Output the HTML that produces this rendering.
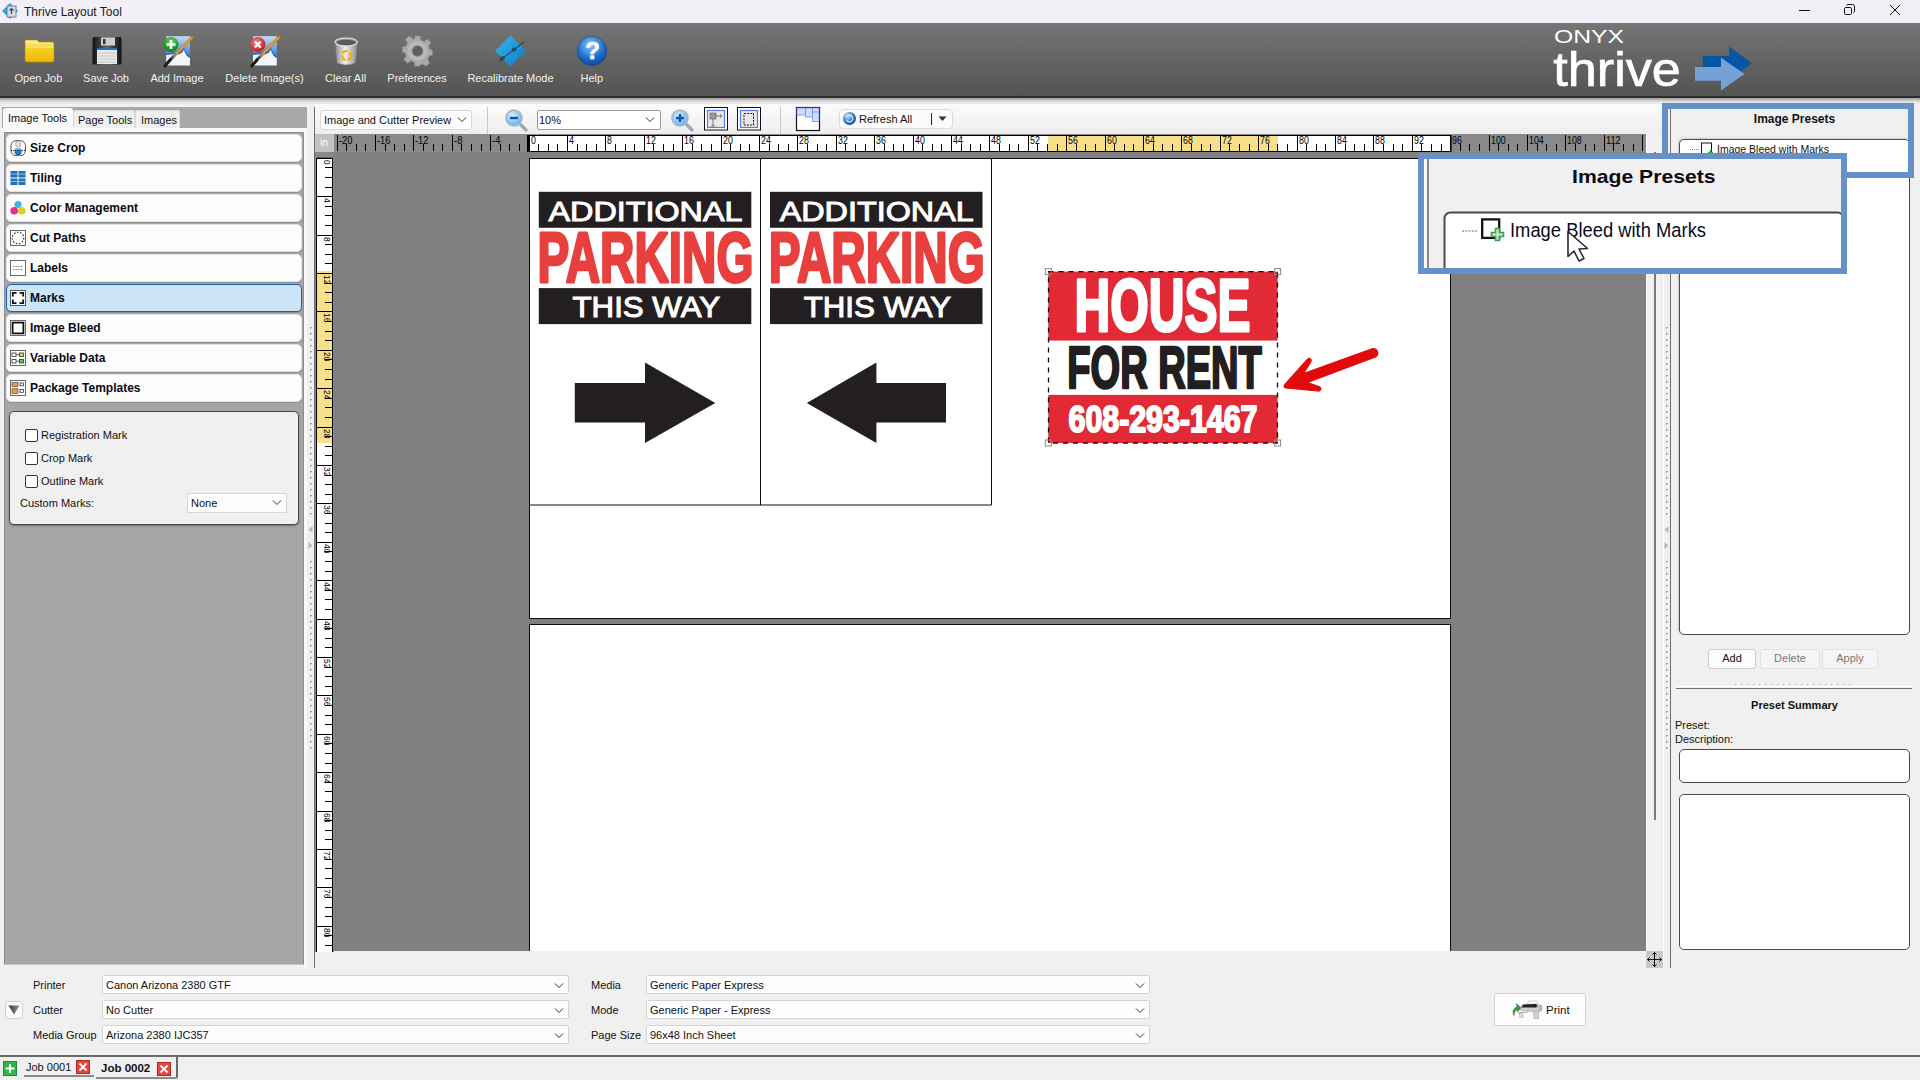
<!DOCTYPE html><html><head><meta charset="utf-8"><title>Thrive Layout Tool</title><style>
*{box-sizing:border-box}
html,body{margin:0;padding:0}
body{width:1920px;height:1080px;position:relative;overflow:hidden;background:#f0f0f0;font-family:"Liberation Sans",sans-serif;color:#000}
.a{position:absolute}
.t{position:absolute;white-space:nowrap;line-height:1}
</style></head><body><div class="a" style="left:0;top:0;width:1920px;height:23px;background:#f3eff6"></div>
<svg class="a" style="left:1px;top:2px" width="18" height="18" viewBox="0 0 18 18">
<path d="M1 9 L9 1 L17 9 L9 17 Z" fill="#2ea3e0"/>
<rect x="6" y="4" width="9" height="11" fill="#d8dbe6" stroke="#5a6a9a" stroke-width="0.8"/>
<path d="M10.5 12 V6.5 M8.5 8.5 L10.5 6.5 L12.5 8.5" stroke="#3b4a8a" stroke-width="1.2" fill="none"/>
</svg>
<div class="t" style="left:24px;top:6px;font-size:12px;color:#1b1b1b">Thrive Layout Tool</div>
<div class="a" style="left:1799px;top:10px;width:11px;height:1px;background:#111"></div>
<svg class="a" style="left:1840px;top:0px" width="20" height="20" viewBox="1840 0 20 20"><rect x="1844.5" y="7.5" width="7" height="7" rx="1.2" fill="none" stroke="#111" stroke-width="1"/><path d="M1846.5 5.5 Q1846.8 4.5 1848 4.5 H1852.5 Q1854.5 4.5 1854.5 6.5 V11 Q1854.5 12.2 1853.5 12.5" fill="none" stroke="#111" stroke-width="1"/></svg>
<svg class="a" style="left:1889px;top:4px" width="12" height="12" viewBox="0 0 12 12"><path d="M1 1 L11 11 M11 1 L1 11" stroke="#111" stroke-width="1"/></svg>
<div class="a" style="left:0;top:23px;width:1920px;height:74px;background:linear-gradient(#757575,#535353)"></div>
<div class="a" style="left:0;top:96px;width:1920px;height:2px;background:#2e2e2e"></div>
<div class="a" style="left:0;top:98px;width:1920px;height:7px;background:linear-gradient(#9a9a9a,#dcdcdc 50%,#f4f4f4)"></div>
<svg class="a" style="left:0;top:23px" width="640" height="74" viewBox="0 23 640 74">
<defs>
<linearGradient id="fold" x1="0" y1="0" x2="0" y2="1"><stop offset="0" stop-color="#fff3a8"/><stop offset="0.35" stop-color="#f7cf2a"/><stop offset="1" stop-color="#f0b800"/></linearGradient>
<linearGradient id="flop" x1="0" y1="0" x2="1" y2="0"><stop offset="0" stop-color="#111"/><stop offset="0.5" stop-color="#666"/><stop offset="1" stop-color="#111"/></linearGradient>
<linearGradient id="pic" x1="0" y1="0" x2="0" y2="1"><stop offset="0" stop-color="#c4ddf3"/><stop offset="0.6" stop-color="#4a8ad6"/><stop offset="1" stop-color="#2a6cc0"/></linearGradient>
<radialGradient id="grn" cx="0.5" cy="0.3" r="0.7"><stop offset="0" stop-color="#6fcf6a"/><stop offset="0.7" stop-color="#1f9a26"/><stop offset="1" stop-color="#127a18"/></radialGradient>
<radialGradient id="red" cx="0.4" cy="0.35" r="0.7"><stop offset="0" stop-color="#ff8080"/><stop offset="1" stop-color="#c0101a"/></radialGradient>
<radialGradient id="hlp" cx="0.45" cy="0.3" r="0.75"><stop offset="0" stop-color="#8cc8ff"/><stop offset="0.6" stop-color="#1f6fd0"/><stop offset="1" stop-color="#0d3f9a"/></radialGradient>
<linearGradient id="dia" x1="0" y1="0" x2="1" y2="1"><stop offset="0" stop-color="#3ab8ec"/><stop offset="1" stop-color="#0a7ac8"/></linearGradient>
<linearGradient id="trash" x1="0" y1="0" x2="1" y2="0"><stop offset="0" stop-color="#8a8a8a"/><stop offset="0.45" stop-color="#f0f0f0"/><stop offset="1" stop-color="#8a8a8a"/></linearGradient>
</defs>
<!-- folder -->
<path d="M25 41 Q25 40 26 40 H37 L39 42 H52 Q54 42 54 44 V60 Q54 62 52 62 H27 Q25 62 25 60 Z" fill="url(#fold)" stroke="#b88a00" stroke-width="0.6"/>
<path d="M26 47 H53" stroke="#fff7c0" stroke-width="1" opacity="0.7"/>
<!-- floppy -->
<rect x="92.5" y="37" width="29" height="27.5" rx="1.5" fill="url(#flop)"/>
<rect x="101" y="37.5" width="14" height="8" fill="#cfcfcf"/><rect x="103" y="39" width="2.5" height="5" fill="#333"/>
<rect x="97" y="48" width="20" height="16" fill="#e9e9e9"/><rect x="97" y="48" width="20" height="2" fill="#2a6cc0"/>
<path d="M98 53 H116 M98 56 H116 M98 59 H116 M98 62 H116" stroke="#b8b8b8" stroke-width="0.7"/>
<!-- add image -->
<g id="picA">
<rect x="166.2" y="36.2" width="23.8" height="29.3" fill="url(#pic)"/>
<path d="M166.2 53.5 Q172 52 178 52.5 Q182 51.5 184 47.5 Q185.5 53 190 56.5 V65.5 H166.2 Z" fill="#1f66c0"/>
<path d="M166.2 55 Q172 54 178 54.5 Q182.5 53.5 184 49.5 Q185.5 56 190 58 V65.5 H166.2 Z" fill="#f2f5f9"/>
<path d="M192.5 37 L173 57" stroke="#c07a20" stroke-width="3" stroke-linecap="round"/>
<path d="M192 37.5 L176 54" stroke="#e8a848" stroke-width="1.2"/>
<path d="M173.5 56.5 L170 60" stroke="#2a5a90" stroke-width="2.5"/>
<path d="M170.5 59.5 L165 66" stroke="#1a1a1a" stroke-width="3" stroke-linecap="round"/>
</g>
<circle cx="171" cy="44.5" r="7.6" fill="url(#grn)"/>
<path d="M171 40 V49 M166.5 44.5 H175.5" stroke="#fff" stroke-width="2.6"/>
<!-- delete image -->
<use href="#picA" transform="translate(86.8 0)"/>
<circle cx="257.8" cy="44.5" r="7.6" fill="url(#red)"/>
<path d="M254.8 41.5 L260.8 47.5 M260.8 41.5 L254.8 47.5" stroke="#fff" stroke-width="2.4"/>
<!-- trash -->
<path d="M335 42 Q346 36 357.5 42 L355.5 63 Q346 67 337 63 Z" fill="url(#trash)" stroke="#777" stroke-width="0.6"/>
<ellipse cx="346.2" cy="42" rx="11.4" ry="4" fill="#9a9a9a" stroke="#eee" stroke-width="1"/>
<ellipse cx="346.2" cy="42.5" rx="9.5" ry="2.8" fill="#5a5a5a"/>
<circle cx="346.5" cy="55.5" r="4.5" fill="none" stroke="#f5b000" stroke-width="2.2" stroke-dasharray="6 2"/>
<!-- gear -->
<g transform="translate(417.5 51)">
<path d="M-2.6 -15 H2.6 L3.4 -11 L6.6 -9.6 L10 -12 L13.7 -8.3 L11.2 -4.9 L12.5 -1.6 L15 -1 V4.2 L11.6 5 L10.2 8.4 L12.3 11.6 L8.6 15.3 L5.3 13 L2.4 14.2 L1.8 15.2 H-2.6 L-3.4 11.2 L-6.6 9.8 L-10 12.2 L-13.7 8.5 L-11.2 5 L-12.5 1.8 L-15 1.2 V-4 L-11.6 -4.8 L-10.2 -8.2 L-12.3 -11.4 L-8.6 -15.1 L-5.3 -12.8 L-3.4 -11.2 Z" fill="#a9a9a9" stroke="#8a8a8a" stroke-width="0.6"/>
<circle r="10" fill="#b8b8b8"/><circle r="5.8" fill="#7a7a7a"/><circle r="4.6" fill="#5f5f5f"/>
</g>
<!-- diamond -->
<path d="M510.5 35.5 L526 51 L510.5 66.5 L495 51 Z" fill="url(#dia)"/>
<path d="M499 61 L524 42" stroke="#1a1a1a" stroke-width="0.8"/>
<circle cx="502.5" cy="58.3" r="1.7" fill="none" stroke="#1a1a1a" stroke-width="0.8"/><circle cx="514" cy="49.5" r="1.7" fill="none" stroke="#1a1a1a" stroke-width="0.8"/>
<!-- help -->
<circle cx="592" cy="51" r="14.6" fill="url(#hlp)" stroke="#0a3a8a" stroke-width="0.5"/>
<text x="592.5" y="59" text-anchor="middle" font-family="Liberation Sans" font-weight="bold" font-size="24" fill="#fff" stroke="#fff" stroke-width="0.6">?</text>
</svg>
<div class="t" style="left:-21.6px;width:120px;text-align:center;top:73px;font-size:11px;color:#f2f2f2">Open Job</div>
<div class="t" style="left:46.0px;width:120px;text-align:center;top:73px;font-size:11px;color:#f2f2f2">Save Job</div>
<div class="t" style="left:117.0px;width:120px;text-align:center;top:73px;font-size:11px;color:#f2f2f2">Add Image</div>
<div class="t" style="left:204.5px;width:120px;text-align:center;top:73px;font-size:11px;color:#f2f2f2">Delete Image(s)</div>
<div class="t" style="left:285.6px;width:120px;text-align:center;top:73px;font-size:11px;color:#f2f2f2">Clear All</div>
<div class="t" style="left:357.0px;width:120px;text-align:center;top:73px;font-size:11px;color:#f2f2f2">Preferences</div>
<div class="t" style="left:450.5px;width:120px;text-align:center;top:73px;font-size:11px;color:#f2f2f2">Recalibrate Mode</div>
<div class="t" style="left:531.8px;width:120px;text-align:center;top:73px;font-size:11px;color:#f2f2f2">Help</div>
<svg class="a" style="left:1540px;top:23px" width="230" height="74" viewBox="1540 23 230 74">
<text x="1554" y="43" font-family="Liberation Sans" font-size="18" fill="#fff" textLength="70" lengthAdjust="spacingAndGlyphs">ONYX</text>
<text x="1553.3" y="86.2" font-family="Liberation Sans" font-size="48.5" fill="#fff" stroke="#fff" stroke-width="0.7" textLength="127.5" lengthAdjust="spacingAndGlyphs">thrive</text>
<path d="M1702.7 56 H1729 V46.4 L1752 63.3 L1729 80 V67 H1702.7 Z" fill="#0656a3"/>
<path d="M1695 67 H1721 V57.8 L1744.5 74 L1721 90.5 V80.7 H1695 Z" fill="#76a1d6"/>
</svg>
<div class="a" style="left:2px;top:107px;width:305px;height:21px;background:#a8a8a8"></div>
<div class="a" style="left:3px;top:108px;width:70px;height:25px;background:#f9f9f9;border-radius:3px 3px 0 0"></div>
<div class="a" style="left:73px;top:110px;width:62px;height:18px;background:#efefef;border:1px solid #dadada;border-bottom:none;border-radius:2px 2px 0 0"></div>
<div class="a" style="left:135px;top:110px;width:45px;height:18px;background:#efefef;border:1px solid #dadada;border-bottom:none;border-radius:2px 2px 0 0"></div>
<div class="t" style="left:8px;top:113px;font-size:11px;color:#111">Image Tools</div>
<div class="t" style="left:78px;top:115px;font-size:11px;color:#111">Page Tools</div>
<div class="t" style="left:141px;top:115px;font-size:11px;color:#111">Images</div>
<div class="a" style="left:4px;top:132px;width:300px;height:833px;background:#a6a6a6;border:1px solid #8c8c94;border-bottom:1px solid #c8c8c8"></div>
<div class="a" style="left:2px;top:128px;width:305px;height:4px;background:#f9f9f9"></div>
<div class="a" style="left:304px;top:128px;width:3px;height:839px;background:#f9f9f9"></div>
<div class="a" style="left:6px;top:134px;width:296px;height:28px;background:#fcfcfc;border:1px solid #e4e4e4;border-radius:5px;box-shadow:0 1px 0 #8f8f8f"></div>
<svg class="a" style="left:10px;top:140px" width="16" height="16" viewBox="0 0 16 16"><defs><linearGradient id="scb" x1="0" y1="0" x2="0" y2="1"><stop offset="0" stop-color="#bfe0f8"/><stop offset="0.45" stop-color="#2a8ad8"/><stop offset="1" stop-color="#0a62b8"/></linearGradient></defs><rect x="1" y="0.7" width="14.5" height="15" rx="5" fill="#fff" stroke="#555" stroke-width="1"/><rect x="5.8" y="1.2" width="4.6" height="5.8" rx="1.8" fill="#e4e4e4" stroke="#888" stroke-width="0.7"/><path d="M4.8 8.2 Q8 6.6 11.4 8.2 L11.8 12 Q11.2 15.4 8.1 15.4 Q5 15.4 4.4 12 Z" fill="url(#scb)"/><path d="M0.8 10.5 H15.6" stroke="#222" stroke-width="1" stroke-dasharray="1.2 1"/></svg>
<div class="t" style="left:30px;top:142px;font-size:12px;font-weight:bold;color:#0a0a14">Size Crop</div>
<div class="a" style="left:6px;top:164px;width:296px;height:28px;background:#fcfcfc;border:1px solid #e4e4e4;border-radius:5px;box-shadow:0 1px 0 #8f8f8f"></div>
<svg class="a" style="left:10px;top:170px" width="16" height="16" viewBox="0 0 16 16"><rect x="0.5" y="1" width="7" height="6.5" fill="#1f6fb8"/><rect x="8.5" y="1" width="7" height="6.5" fill="#1f6fb8"/><rect x="0.5" y="8.5" width="7" height="6.5" fill="#1f6fb8"/><rect x="8.5" y="8.5" width="7" height="6.5" fill="#1f6fb8"/><path d="M1 4 H7 M9 4 H15 M1 11.5 H7 M9 11.5 H15" stroke="#8cc4f0" stroke-width="1"/></svg>
<div class="t" style="left:30px;top:172px;font-size:12px;font-weight:bold;color:#0a0a14">Tiling</div>
<div class="a" style="left:6px;top:194px;width:296px;height:28px;background:#fcfcfc;border:1px solid #e4e4e4;border-radius:5px;box-shadow:0 1px 0 #8f8f8f"></div>
<svg class="a" style="left:10px;top:200px" width="16" height="16" viewBox="0 0 16 16"><circle cx="8" cy="4.5" r="3.6" fill="#3cb5ea"/><circle cx="4.2" cy="10.8" r="3.8" fill="#e8308a"/><circle cx="11.8" cy="10.8" r="3.8" fill="#d9d02a"/></svg>
<div class="t" style="left:30px;top:202px;font-size:12px;font-weight:bold;color:#0a0a14">Color Management</div>
<div class="a" style="left:6px;top:224px;width:296px;height:28px;background:#fcfcfc;border:1px solid #e4e4e4;border-radius:5px;box-shadow:0 1px 0 #8f8f8f"></div>
<svg class="a" style="left:10px;top:230px" width="16" height="16" viewBox="0 0 16 16"><rect x="0.5" y="0.5" width="15" height="15" fill="#fff" stroke="#444" stroke-width="0.8"/><circle cx="8" cy="8" r="5.8" fill="none" stroke="#222" stroke-width="1.1" stroke-dasharray="1.6 1.6"/></svg>
<div class="t" style="left:30px;top:232px;font-size:12px;font-weight:bold;color:#0a0a14">Cut Paths</div>
<div class="a" style="left:6px;top:254px;width:296px;height:28px;background:#fcfcfc;border:1px solid #e4e4e4;border-radius:5px;box-shadow:0 1px 0 #8f8f8f"></div>
<svg class="a" style="left:10px;top:260px" width="16" height="16" viewBox="0 0 16 16"><rect x="0.5" y="0.5" width="15" height="15" fill="#fff" stroke="#444" stroke-width="0.8"/><path d="M3 6.5 H13 M3 9.5 H13" stroke="#777" stroke-width="1" stroke-dasharray="1 0.6"/></svg>
<div class="t" style="left:30px;top:262px;font-size:12px;font-weight:bold;color:#0a0a14">Labels</div>
<div class="a" style="left:6px;top:284px;width:296px;height:28px;background:#cce4f7;border:1px solid #1a5fb0;border-radius:5px;box-shadow:0 1px 0 #8f8f8f"></div>
<svg class="a" style="left:10px;top:290px" width="16" height="16" viewBox="0 0 16 16"><rect x="0.5" y="0.5" width="15" height="15" fill="#fff" stroke="#555" stroke-width="1"/><path d="M2.8 6.5 V2.8 H6.5 M9.5 2.8 H13.2 V6.5 M13.2 9.5 V13.2 H9.5 M6.5 13.2 H2.8 V9.5" stroke="#111" stroke-width="1.8" fill="none"/></svg>
<div class="t" style="left:30px;top:292px;font-size:12px;font-weight:bold;color:#0a0a14">Marks</div>
<div class="a" style="left:6px;top:314px;width:296px;height:28px;background:#fcfcfc;border:1px solid #e4e4e4;border-radius:5px;box-shadow:0 1px 0 #8f8f8f"></div>
<svg class="a" style="left:10px;top:320px" width="16" height="16" viewBox="0 0 16 16"><rect x="0.5" y="0.5" width="15" height="15" fill="#fff" stroke="#444" stroke-width="0.8"/><rect x="2.6" y="2.6" width="10.8" height="10.8" fill="none" stroke="#111" stroke-width="1.8"/></svg>
<div class="t" style="left:30px;top:322px;font-size:12px;font-weight:bold;color:#0a0a14">Image Bleed</div>
<div class="a" style="left:6px;top:344px;width:296px;height:28px;background:#fcfcfc;border:1px solid #e4e4e4;border-radius:5px;box-shadow:0 1px 0 #8f8f8f"></div>
<svg class="a" style="left:10px;top:350px" width="16" height="16" viewBox="0 0 16 16"><rect x="0.5" y="0.5" width="15" height="15" fill="#fff" stroke="#444" stroke-width="0.8"/><rect x="2" y="3" width="4" height="3.5" fill="none" stroke="#333" stroke-width="0.8"/><rect x="9.5" y="3" width="4" height="3.5" fill="#dde060" stroke="#333" stroke-width="0.8"/><rect x="2" y="9.5" width="4" height="3.5" fill="none" stroke="#333" stroke-width="0.8"/><rect x="9.5" y="9.5" width="4" height="3.5" fill="#50d060" stroke="#333" stroke-width="0.8"/><path d="M6 4.7 H9.5 M6 11.2 H9.5" stroke="#333" stroke-width="0.8"/></svg>
<div class="t" style="left:30px;top:352px;font-size:12px;font-weight:bold;color:#0a0a14">Variable Data</div>
<div class="a" style="left:6px;top:374px;width:296px;height:28px;background:#fcfcfc;border:1px solid #e4e4e4;border-radius:5px;box-shadow:0 1px 0 #8f8f8f"></div>
<svg class="a" style="left:10px;top:380px" width="16" height="16" viewBox="0 0 16 16"><rect x="0.5" y="0.5" width="15" height="15" fill="#fff" stroke="#444" stroke-width="0.8"/><rect x="2" y="2.5" width="6" height="4" fill="#f59a30" stroke="#333" stroke-width="0.6"/><rect x="2" y="8.8" width="6" height="4.5" fill="#f59a30" stroke="#333" stroke-width="0.6"/><rect x="10" y="3" width="3.5" height="2.8" fill="none" stroke="#333" stroke-width="0.8"/><rect x="10" y="9.5" width="3.5" height="2.8" fill="none" stroke="#333" stroke-width="0.8"/></svg>
<div class="t" style="left:30px;top:382px;font-size:12px;font-weight:bold;color:#0a0a14">Package Templates</div>
<div class="a" style="left:9px;top:411px;width:290px;height:114px;background:#f0f0f0;border:1px solid #4a4a4a;border-radius:5px;box-shadow:0 1px 2px rgba(0,0,0,.35)"></div>
<div class="a" style="left:25px;top:429px;width:13px;height:13px;background:#fff;border:1px solid #333;border-radius:2px"></div>
<div class="t" style="left:41px;top:430px;font-size:11px;color:#111">Registration Mark</div>
<div class="a" style="left:25px;top:452px;width:13px;height:13px;background:#fff;border:1px solid #333;border-radius:2px"></div>
<div class="t" style="left:41px;top:453px;font-size:11px;color:#111">Crop Mark</div>
<div class="a" style="left:25px;top:475px;width:13px;height:13px;background:#fff;border:1px solid #333;border-radius:2px"></div>
<div class="t" style="left:41px;top:476px;font-size:11px;color:#111">Outline Mark</div>
<div class="t" style="left:20px;top:498px;font-size:11px;color:#111">Custom Marks:</div>
<div class="a" style="left:187px;top:493px;width:100px;height:20px;background:#fdfdfd;border:1px solid #d6d6d6"></div>
<div class="t" style="left:191px;top:498px;font-size:11px;color:#111">None</div>
<svg class="a" style="left:272px;top:499px" width="10" height="7" viewBox="0 0 10 7"><path d="M1 1.5 L5 5.5 L9 1.5" fill="none" stroke="#333" stroke-width="1"/></svg>
<div class="a" style="left:314px;top:107px;width:1px;height:861px;background:#6e6e6e"></div>
<div class="a" style="left:315px;top:104px;width:1347px;height:30px;background:linear-gradient(#fbfbfb,#eeeeee)"></div>
<div class="a" style="left:320px;top:110px;width:152px;height:20px;background:#fdfdfd;border:1px solid #d9d9d9;border-radius:3px"></div>
<div class="t" style="left:324px;top:115px;font-size:11px;color:#111">Image and Cutter Preview</div>
<svg class="a" style="left:457px;top:116px" width="10" height="7" viewBox="0 0 10 7"><path d="M1 1.5 L5 5.5 L9 1.5" fill="none" stroke="#333" stroke-width="1"/></svg>
<div class="a" style="left:487px;top:107px;width:1px;height:27px;background:#c8c8c8"></div>
<div class="a" style="left:780px;top:107px;width:1px;height:27px;background:#c8c8c8"></div>
<svg class="a" style="left:504px;top:108px" width="24" height="24" viewBox="0 0 24 24"><defs><radialGradient id="mg504" cx="0.4" cy="0.35" r="0.7"><stop offset="0" stop-color="#d6f0ff"/><stop offset="1" stop-color="#5aaee8"/></radialGradient></defs><path d="M15 15 L22 22" stroke="#9aa8b8" stroke-width="3.2" stroke-linecap="round"/><circle cx="10" cy="10" r="8" fill="url(#mg504)" stroke="#a8b8c8" stroke-width="1.6"/><path d="M6 10 H14" stroke="#1a4fb0" stroke-width="2.4"/></svg>
<svg class="a" style="left:670px;top:108px" width="24" height="24" viewBox="0 0 24 24"><defs><radialGradient id="mg670" cx="0.4" cy="0.35" r="0.7"><stop offset="0" stop-color="#d6f0ff"/><stop offset="1" stop-color="#5aaee8"/></radialGradient></defs><path d="M15 15 L22 22" stroke="#9aa8b8" stroke-width="3.2" stroke-linecap="round"/><circle cx="10" cy="10" r="8" fill="url(#mg670)" stroke="#a8b8c8" stroke-width="1.6"/><path d="M6 10 H14 M10 6 V14" stroke="#1a4fb0" stroke-width="2.4"/></svg>
<div class="a" style="left:537px;top:110px;width:124px;height:20px;background:#fff;border:1px solid #9a9a9a;border-radius:2px"></div>
<div class="t" style="left:539px;top:115px;font-size:11px;color:#111">10%</div>
<svg class="a" style="left:645px;top:116px" width="10" height="7" viewBox="0 0 10 7"><path d="M1 1.5 L5 5.5 L9 1.5" fill="none" stroke="#333" stroke-width="1"/></svg>
<svg class="a" style="left:703px;top:106px" width="120" height="26" viewBox="703 106 120 26">
<rect x="704.5" y="107.5" width="23" height="22.5" fill="#fff" stroke="#111" stroke-width="1"/><rect x="707.5" y="110.5" width="17" height="17" fill="#e8e8e8" stroke="#5a7af0" stroke-width="1.2"/>
<rect x="710" y="113" width="6" height="6" fill="#999" stroke="#555" stroke-width="0.6"/><path d="M713 119 V126 M711 126 H715 M716 116 H722 M720 114 L722 116 L720 118" stroke="#444" stroke-width="0.7" fill="none"/>
<rect x="737.5" y="107.5" width="23" height="22.5" fill="#fff" stroke="#111" stroke-width="1"/><rect x="740.5" y="110.5" width="17" height="17" fill="#e8e8e8" stroke="#5a7af0" stroke-width="1.2"/>
<rect x="744" y="113.5" width="9.5" height="11.5" fill="none" stroke="#111" stroke-width="1" stroke-dasharray="2 1.2"/>
<rect x="796.5" y="107.5" width="23" height="23" fill="#fff" stroke="#111" stroke-width="1.2"/>
<path d="M797 108 H819 V121.5 H812.5 V117 H805.5 V115 H797 Z" fill="#cfdcff" stroke="#6b8af0" stroke-width="0.8"/>
<path d="M805.5 108 V115 M812.5 108 V117 M812.5 112 H819" stroke="#6b8af0" stroke-width="0.8"/>
</svg>
<div class="a" style="left:839px;top:109px;width:114px;height:20px;background:#fbfbfb;border:1px solid #dcdcdc;border-radius:4px"></div>
<svg class="a" style="left:842px;top:111px" width="15" height="15" viewBox="0 0 15 15"><defs><radialGradient id="rf" cx="0.35" cy="0.3" r="0.75"><stop offset="0" stop-color="#cfe8ff"/><stop offset="0.6" stop-color="#2a7ad0"/><stop offset="1" stop-color="#0d4a9a"/></radialGradient></defs><circle cx="7.5" cy="7.5" r="6.5" fill="url(#rf)"/><path d="M4.5 9 A3.3 3.3 0 1 0 6 4.5" stroke="#e8f4ff" stroke-width="1.1" fill="none"/></svg>
<div class="t" style="left:859px;top:114px;font-size:11px;color:#111">Refresh All</div>
<div class="a" style="left:931px;top:113px;width:1px;height:12px;background:#222"></div>
<svg class="a" style="left:938px;top:116px" width="9" height="6" viewBox="0 0 9 6"><path d="M0.5 0.5 H8.5 L4.5 5 Z" fill="#333"/></svg>
<div class="a" style="left:315px;top:134px;width:19px;height:18px;background:#c2c2c2"></div>
<div class="t" style="left:320px;top:138px;font-size:10px;color:#fff">in</div>
<svg class="a" style="left:334px;top:134px" width="1312" height="18" viewBox="334 134 1312 18"><rect x="334" y="134" width="1312" height="18" fill="#898989"/><rect x="528.5" y="135.5" width="922.5999999999999" height="16" fill="#fff" stroke="#000" stroke-width="1"/><rect x="1048" y="136" width="230" height="15" fill="#f8df8c"/><path d="M528 135 V152" stroke="#000" stroke-width="2"/><path d="M337.5 135 V151 M346.5 144 V151 M356.5 144 V151 M365.5 144 V151 M375.5 135 V151 M385.5 144 V151 M394.5 144 V151 M404.5 144 V151 M413.5 135 V151 M423.5 144 V151 M433.5 144 V151 M442.5 144 V151 M452.5 135 V151 M461.5 144 V151 M471.5 144 V151 M481.5 144 V151 M490.5 135 V151 M500.5 144 V151 M509.5 144 V151 M519.5 144 V151 M529.5 135 V151 M538.5 144 V151 M548.5 144 V151 M557.5 144 V151 M567.5 135 V151 M577.5 144 V151 M586.5 144 V151 M596.5 144 V151 M605.5 135 V151 M615.5 144 V151 M625.5 144 V151 M634.5 144 V151 M644.5 135 V151 M653.5 144 V151 M663.5 144 V151 M673.5 144 V151 M682.5 135 V151 M692.5 144 V151 M701.5 144 V151 M711.5 144 V151 M721.5 135 V151 M730.5 144 V151 M740.5 144 V151 M749.5 144 V151 M759.5 135 V151 M769.5 144 V151 M778.5 144 V151 M788.5 144 V151 M797.5 135 V151 M807.5 144 V151 M817.5 144 V151 M826.5 144 V151 M836.5 135 V151 M845.5 144 V151 M855.5 144 V151 M865.5 144 V151 M874.5 135 V151 M884.5 144 V151 M893.5 144 V151 M903.5 144 V151 M913.5 135 V151 M922.5 144 V151 M932.5 144 V151 M941.5 144 V151 M951.5 135 V151 M961.5 144 V151 M970.5 144 V151 M980.5 144 V151 M989.5 135 V151 M999.5 144 V151 M1009.5 144 V151 M1018.5 144 V151 M1028.5 135 V151 M1037.5 144 V151 M1047.5 144 V151 M1057.5 144 V151 M1066.5 135 V151 M1076.5 144 V151 M1085.5 144 V151 M1095.5 144 V151 M1105.5 135 V151 M1114.5 144 V151 M1124.5 144 V151 M1133.5 144 V151 M1143.5 135 V151 M1153.5 144 V151 M1162.5 144 V151 M1172.5 144 V151 M1181.5 135 V151 M1191.5 144 V151 M1201.5 144 V151 M1210.5 144 V151 M1220.5 135 V151 M1229.5 144 V151 M1239.5 144 V151 M1249.5 144 V151 M1258.5 135 V151 M1268.5 144 V151 M1277.5 144 V151 M1287.5 144 V151 M1297.5 135 V151 M1306.5 144 V151 M1316.5 144 V151 M1325.5 144 V151 M1335.5 135 V151 M1345.5 144 V151 M1354.5 144 V151 M1364.5 144 V151 M1373.5 135 V151 M1383.5 144 V151 M1393.5 144 V151 M1402.5 144 V151 M1412.5 135 V151 M1421.5 144 V151 M1431.5 144 V151 M1441.5 144 V151 M1450.5 135 V151 M1460.5 144 V151 M1469.5 144 V151 M1479.5 144 V151 M1489.5 135 V151 M1498.5 144 V151 M1508.5 144 V151 M1517.5 144 V151 M1527.5 135 V151 M1537.5 144 V151 M1546.5 144 V151 M1556.5 144 V151 M1565.5 135 V151 M1575.5 144 V151 M1585.5 144 V151 M1594.5 144 V151 M1604.5 135 V151 M1613.5 144 V151 M1623.5 144 V151 M1633.5 144 V151 M1642.5 135 V151" stroke="#000" stroke-width="1"/><text x="339.0" y="144" font-size="10" font-family="Liberation Sans" fill="#000" textLength="13.3" lengthAdjust="spacingAndGlyphs">-20</text><text x="377.0" y="144" font-size="10" font-family="Liberation Sans" fill="#000" textLength="13.3" lengthAdjust="spacingAndGlyphs">-16</text><text x="415.0" y="144" font-size="10" font-family="Liberation Sans" fill="#000" textLength="13.3" lengthAdjust="spacingAndGlyphs">-12</text><text x="454.0" y="144" font-size="10" font-family="Liberation Sans" fill="#000" textLength="8.4" lengthAdjust="spacingAndGlyphs">-8</text><text x="492.0" y="144" font-size="10" font-family="Liberation Sans" fill="#000" textLength="8.4" lengthAdjust="spacingAndGlyphs">-4</text><text x="531.0" y="144" font-size="10" font-family="Liberation Sans" fill="#000" textLength="4.9" lengthAdjust="spacingAndGlyphs">0</text><text x="569.0" y="144" font-size="10" font-family="Liberation Sans" fill="#000" textLength="4.9" lengthAdjust="spacingAndGlyphs">4</text><text x="607.0" y="144" font-size="10" font-family="Liberation Sans" fill="#000" textLength="4.9" lengthAdjust="spacingAndGlyphs">8</text><text x="646.0" y="144" font-size="10" font-family="Liberation Sans" fill="#000" textLength="9.8" lengthAdjust="spacingAndGlyphs">12</text><text x="684.0" y="144" font-size="10" font-family="Liberation Sans" fill="#000" textLength="9.8" lengthAdjust="spacingAndGlyphs">16</text><text x="723.0" y="144" font-size="10" font-family="Liberation Sans" fill="#000" textLength="9.8" lengthAdjust="spacingAndGlyphs">20</text><text x="761.0" y="144" font-size="10" font-family="Liberation Sans" fill="#000" textLength="9.8" lengthAdjust="spacingAndGlyphs">24</text><text x="799.0" y="144" font-size="10" font-family="Liberation Sans" fill="#000" textLength="9.8" lengthAdjust="spacingAndGlyphs">28</text><text x="838.0" y="144" font-size="10" font-family="Liberation Sans" fill="#000" textLength="9.8" lengthAdjust="spacingAndGlyphs">32</text><text x="876.0" y="144" font-size="10" font-family="Liberation Sans" fill="#000" textLength="9.8" lengthAdjust="spacingAndGlyphs">36</text><text x="915.0" y="144" font-size="10" font-family="Liberation Sans" fill="#000" textLength="9.8" lengthAdjust="spacingAndGlyphs">40</text><text x="953.0" y="144" font-size="10" font-family="Liberation Sans" fill="#000" textLength="9.8" lengthAdjust="spacingAndGlyphs">44</text><text x="991.0" y="144" font-size="10" font-family="Liberation Sans" fill="#000" textLength="9.8" lengthAdjust="spacingAndGlyphs">48</text><text x="1030.0" y="144" font-size="10" font-family="Liberation Sans" fill="#000" textLength="9.8" lengthAdjust="spacingAndGlyphs">52</text><text x="1068.0" y="144" font-size="10" font-family="Liberation Sans" fill="#000" textLength="9.8" lengthAdjust="spacingAndGlyphs">56</text><text x="1107.0" y="144" font-size="10" font-family="Liberation Sans" fill="#000" textLength="9.8" lengthAdjust="spacingAndGlyphs">60</text><text x="1145.0" y="144" font-size="10" font-family="Liberation Sans" fill="#000" textLength="9.8" lengthAdjust="spacingAndGlyphs">64</text><text x="1183.0" y="144" font-size="10" font-family="Liberation Sans" fill="#000" textLength="9.8" lengthAdjust="spacingAndGlyphs">68</text><text x="1222.0" y="144" font-size="10" font-family="Liberation Sans" fill="#000" textLength="9.8" lengthAdjust="spacingAndGlyphs">72</text><text x="1260.0" y="144" font-size="10" font-family="Liberation Sans" fill="#000" textLength="9.8" lengthAdjust="spacingAndGlyphs">76</text><text x="1299.0" y="144" font-size="10" font-family="Liberation Sans" fill="#000" textLength="9.8" lengthAdjust="spacingAndGlyphs">80</text><text x="1337.0" y="144" font-size="10" font-family="Liberation Sans" fill="#000" textLength="9.8" lengthAdjust="spacingAndGlyphs">84</text><text x="1375.0" y="144" font-size="10" font-family="Liberation Sans" fill="#000" textLength="9.8" lengthAdjust="spacingAndGlyphs">88</text><text x="1414.0" y="144" font-size="10" font-family="Liberation Sans" fill="#000" textLength="9.8" lengthAdjust="spacingAndGlyphs">92</text><text x="1452.0" y="144" font-size="10" font-family="Liberation Sans" fill="#000" textLength="9.8" lengthAdjust="spacingAndGlyphs">96</text><text x="1491.0" y="144" font-size="10" font-family="Liberation Sans" fill="#000" textLength="14.7" lengthAdjust="spacingAndGlyphs">100</text><text x="1529.0" y="144" font-size="10" font-family="Liberation Sans" fill="#000" textLength="14.7" lengthAdjust="spacingAndGlyphs">104</text><text x="1567.0" y="144" font-size="10" font-family="Liberation Sans" fill="#000" textLength="14.7" lengthAdjust="spacingAndGlyphs">108</text><text x="1606.0" y="144" font-size="10" font-family="Liberation Sans" fill="#000" textLength="14.7" lengthAdjust="spacingAndGlyphs">112</text></svg>
<svg class="a" style="left:315px;top:152px" width="19" height="800" viewBox="315 152 19 800"><rect x="315" y="152" width="19" height="800" fill="#898989"/><rect x="316.5" y="158.2" width="16" height="800" fill="#fff" stroke="#000" stroke-width="1"/><rect x="317" y="271" width="15" height="172" fill="#f8df8c"/><path d="M316 158.5 H333 M325 167.5 H333 M325 177.5 H333 M325 187.5 H333 M316 196.5 H333 M325 206.5 H333 M325 215.5 H333 M325 225.5 H333 M316 235.5 H333 M325 244.5 H333 M325 254.5 H333 M325 263.5 H333 M316 273.5 H333 M325 283.5 H333 M325 292.5 H333 M325 302.5 H333 M316 311.5 H333 M325 321.5 H333 M325 331.5 H333 M325 340.5 H333 M316 350.5 H333 M325 359.5 H333 M325 369.5 H333 M325 379.5 H333 M316 388.5 H333 M325 398.5 H333 M325 407.5 H333 M325 417.5 H333 M316 427.5 H333 M325 436.5 H333 M325 446.5 H333 M325 455.5 H333 M316 465.5 H333 M325 475.5 H333 M325 484.5 H333 M325 494.5 H333 M316 503.5 H333 M325 513.5 H333 M325 523.5 H333 M325 532.5 H333 M316 542.5 H333 M325 551.5 H333 M325 561.5 H333 M325 571.5 H333 M316 580.5 H333 M325 590.5 H333 M325 599.5 H333 M325 609.5 H333 M316 619.5 H333 M325 628.5 H333 M325 638.5 H333 M325 647.5 H333 M316 657.5 H333 M325 667.5 H333 M325 676.5 H333 M325 686.5 H333 M316 695.5 H333 M325 705.5 H333 M325 715.5 H333 M325 724.5 H333 M316 734.5 H333 M325 743.5 H333 M325 753.5 H333 M325 763.5 H333 M316 772.5 H333 M325 782.5 H333 M325 791.5 H333 M325 801.5 H333 M316 811.5 H333 M325 820.5 H333 M325 830.5 H333 M325 839.5 H333 M316 849.5 H333 M325 859.5 H333 M325 868.5 H333 M325 878.5 H333 M316 887.5 H333 M325 897.5 H333 M325 907.5 H333 M325 916.5 H333 M316 926.5 H333 M325 935.5 H333 M325 945.5 H333" stroke="#000" stroke-width="1"/><text transform="translate(323.5 160.0) rotate(90)" font-size="9.5" font-family="Liberation Sans" fill="#000" textLength="4.7" lengthAdjust="spacingAndGlyphs">0</text><text transform="translate(323.5 198.0) rotate(90)" font-size="9.5" font-family="Liberation Sans" fill="#000" textLength="4.7" lengthAdjust="spacingAndGlyphs">4</text><text transform="translate(323.5 237.0) rotate(90)" font-size="9.5" font-family="Liberation Sans" fill="#000" textLength="4.7" lengthAdjust="spacingAndGlyphs">8</text><text transform="translate(323.5 275.0) rotate(90)" font-size="9.5" font-family="Liberation Sans" fill="#000" textLength="9.4" lengthAdjust="spacingAndGlyphs">12</text><text transform="translate(323.5 313.0) rotate(90)" font-size="9.5" font-family="Liberation Sans" fill="#000" textLength="9.4" lengthAdjust="spacingAndGlyphs">16</text><text transform="translate(323.5 352.0) rotate(90)" font-size="9.5" font-family="Liberation Sans" fill="#000" textLength="9.4" lengthAdjust="spacingAndGlyphs">20</text><text transform="translate(323.5 390.0) rotate(90)" font-size="9.5" font-family="Liberation Sans" fill="#000" textLength="9.4" lengthAdjust="spacingAndGlyphs">24</text><text transform="translate(323.5 429.0) rotate(90)" font-size="9.5" font-family="Liberation Sans" fill="#000" textLength="9.4" lengthAdjust="spacingAndGlyphs">28</text><text transform="translate(323.5 467.0) rotate(90)" font-size="9.5" font-family="Liberation Sans" fill="#000" textLength="9.4" lengthAdjust="spacingAndGlyphs">32</text><text transform="translate(323.5 505.0) rotate(90)" font-size="9.5" font-family="Liberation Sans" fill="#000" textLength="9.4" lengthAdjust="spacingAndGlyphs">36</text><text transform="translate(323.5 544.0) rotate(90)" font-size="9.5" font-family="Liberation Sans" fill="#000" textLength="9.4" lengthAdjust="spacingAndGlyphs">40</text><text transform="translate(323.5 582.0) rotate(90)" font-size="9.5" font-family="Liberation Sans" fill="#000" textLength="9.4" lengthAdjust="spacingAndGlyphs">44</text><text transform="translate(323.5 621.0) rotate(90)" font-size="9.5" font-family="Liberation Sans" fill="#000" textLength="9.4" lengthAdjust="spacingAndGlyphs">48</text><text transform="translate(323.5 659.0) rotate(90)" font-size="9.5" font-family="Liberation Sans" fill="#000" textLength="9.4" lengthAdjust="spacingAndGlyphs">52</text><text transform="translate(323.5 697.0) rotate(90)" font-size="9.5" font-family="Liberation Sans" fill="#000" textLength="9.4" lengthAdjust="spacingAndGlyphs">56</text><text transform="translate(323.5 736.0) rotate(90)" font-size="9.5" font-family="Liberation Sans" fill="#000" textLength="9.4" lengthAdjust="spacingAndGlyphs">60</text><text transform="translate(323.5 774.0) rotate(90)" font-size="9.5" font-family="Liberation Sans" fill="#000" textLength="9.4" lengthAdjust="spacingAndGlyphs">64</text><text transform="translate(323.5 813.0) rotate(90)" font-size="9.5" font-family="Liberation Sans" fill="#000" textLength="9.4" lengthAdjust="spacingAndGlyphs">68</text><text transform="translate(323.5 851.0) rotate(90)" font-size="9.5" font-family="Liberation Sans" fill="#000" textLength="9.4" lengthAdjust="spacingAndGlyphs">72</text><text transform="translate(323.5 889.0) rotate(90)" font-size="9.5" font-family="Liberation Sans" fill="#000" textLength="9.4" lengthAdjust="spacingAndGlyphs">76</text><text transform="translate(323.5 928.0) rotate(90)" font-size="9.5" font-family="Liberation Sans" fill="#000" textLength="9.4" lengthAdjust="spacingAndGlyphs">80</text></svg>
<div class="a" style="left:334px;top:152px;width:1312px;height:799px;background:#808080;overflow:hidden">
<div class="a" style="left:195px;top:6px;width:922px;height:461px;background:#fff;border:1px solid #0c0c16"></div>
<div class="a" style="left:195px;top:472px;width:922px;height:400px;background:#fff;border:1px solid #0c0c16"></div>
</div>
<div class="a" style="left:1646px;top:134px;width:1px;height:817px;background:#fff"></div>
<div class="a" style="left:1654px;top:152px;width:2px;height:668px;background:#7a7a7a"></div>
<div class="a" style="left:1646px;top:951px;width:17px;height:17px;background:#c8c8c8"></div>
<svg class="a" style="left:1646px;top:951px" width="17" height="17" viewBox="0 0 17 17"><path d="M8.5 1.5 V15.5 M1.5 8.5 H15.5 M6.5 3.5 L8.5 1.5 L10.5 3.5 M6.5 13.5 L8.5 15.5 L10.5 13.5 M3.5 6.5 L1.5 8.5 L3.5 10.5 M13.5 6.5 L15.5 8.5 L13.5 10.5" stroke="#111" stroke-width="1" fill="none"/></svg>
<svg class="a" style="left:334px;top:152px" width="1312" height="799" viewBox="334 152 1312 799"><path d="M760.5 158 V505 M529.5 505 H991.5 V158" stroke="#0c0c16" stroke-width="1" fill="none"/><rect x="538.8" y="191.8" width="212.5" height="36" fill="#231f20"/><text x="548.5" y="220.6" font-family="Liberation Sans" font-size="28.4" fill="#fff" stroke="#fff" stroke-width="1" textLength="194" lengthAdjust="spacingAndGlyphs">ADDITIONAL</text><text x="537.5" y="282.2" font-family="Liberation Sans" font-weight="bold" font-size="70.5" fill="#e8403e" stroke="#e8403e" stroke-width="3" stroke-linejoin="round" textLength="216" lengthAdjust="spacingAndGlyphs">PARKING</text><rect x="538.8" y="288.1" width="212.5" height="36" fill="#231f20"/><text x="572.5" y="316.7" font-family="Liberation Sans" font-size="28.6" fill="#fff" stroke="#fff" stroke-width="1" textLength="147.5" lengthAdjust="spacingAndGlyphs">THIS WAY</text><path d="M574.8 383 H645 V362.5 L715.3 402.9 L645 443 V422.4 H574.8 Z" fill="#231f20" transform="translate(0 0)"/><rect x="770.0" y="191.8" width="212.5" height="36" fill="#231f20"/><text x="779.7" y="220.6" font-family="Liberation Sans" font-size="28.4" fill="#fff" stroke="#fff" stroke-width="1" textLength="194" lengthAdjust="spacingAndGlyphs">ADDITIONAL</text><text x="768.7" y="282.2" font-family="Liberation Sans" font-weight="bold" font-size="70.5" fill="#e8403e" stroke="#e8403e" stroke-width="3" stroke-linejoin="round" textLength="216" lengthAdjust="spacingAndGlyphs">PARKING</text><rect x="770.0" y="288.1" width="212.5" height="36" fill="#231f20"/><text x="803.7" y="316.7" font-family="Liberation Sans" font-size="28.6" fill="#fff" stroke="#fff" stroke-width="1" textLength="147.5" lengthAdjust="spacingAndGlyphs">THIS WAY</text><path d="M946 383 H876.4 V362.5 L806.8 402.9 L876.4 443 V422.4 H946 Z" fill="#231f20"/><rect x="1048.3" y="271.6" width="229.3" height="69" fill="#e12a35"/><rect x="1048.3" y="394.9" width="229.3" height="48.1" fill="#e12a35"/><text x="1074.5" y="331.2" font-family="Liberation Sans" font-weight="bold" font-size="74" fill="#fff" stroke="#fff" stroke-width="3" stroke-linejoin="round" textLength="176" lengthAdjust="spacingAndGlyphs">HOUSE</text><text x="1067.3" y="387.75" font-family="Liberation Sans" font-weight="bold" font-size="58.7" fill="#231f20" stroke="#231f20" stroke-width="2.5" stroke-linejoin="round" textLength="194.5" lengthAdjust="spacingAndGlyphs">FOR RENT</text><text x="1068.5" y="432.1" font-family="Liberation Sans" font-weight="bold" font-size="37.5" fill="#fff" stroke="#fff" stroke-width="2" stroke-linejoin="round" textLength="189" lengthAdjust="spacingAndGlyphs">608-293-1467</text><rect x="1048.5" y="271.6" width="229" height="171.4" fill="none" stroke="#111" stroke-width="1.3" stroke-dasharray="5 5"/><rect x="1045.3" y="268.6" width="6" height="6" fill="none" stroke="#8a8a8a" stroke-width="1"/><rect x="1274.6" y="268.6" width="6" height="6" fill="none" stroke="#8a8a8a" stroke-width="1"/><rect x="1045.3" y="440.0" width="6" height="6" fill="none" stroke="#8a8a8a" stroke-width="1"/><rect x="1274.6" y="440.0" width="6" height="6" fill="none" stroke="#8a8a8a" stroke-width="1"/><path d="M1284.5 385 L1307.5 359.2 Q1309.5 357.5 1311 359.5 Q1311.5 361 1310.5 362.5 L1303.5 373.5 L1372 348.8 Q1376 348 1377.5 351.5 Q1378.5 355 1375.5 357 L1307.5 382.5 L1319.5 386.8 Q1321.5 388 1320.5 390 Q1319.5 391.5 1317.5 391 L1286 388 Q1283 387.5 1284.5 385 Z" fill="#e20b0b" stroke="#e20b0b" stroke-width="1.2" stroke-linejoin="round"/></svg>
<div class="a" style="left:1670px;top:107px;width:1px;height:861px;background:#6e6e6e"></div>
<svg class="a" style="left:0;top:0" width="1920" height="800" viewBox="0 0 1920 800"><rect x="1666" y="327" width="2" height="1" fill="#a0a0a0"/><rect x="1666" y="328" width="1" height="1" fill="#a0a0a0"/><rect x="1666" y="333" width="2" height="1" fill="#a0a0a0"/><rect x="1666" y="334" width="1" height="1" fill="#a0a0a0"/><rect x="1666" y="339" width="2" height="1" fill="#a0a0a0"/><rect x="1666" y="340" width="1" height="1" fill="#a0a0a0"/><rect x="1666" y="345" width="2" height="1" fill="#a0a0a0"/><rect x="1666" y="346" width="1" height="1" fill="#a0a0a0"/><rect x="1666" y="351" width="2" height="1" fill="#a0a0a0"/><rect x="1666" y="352" width="1" height="1" fill="#a0a0a0"/><rect x="1666" y="357" width="2" height="1" fill="#a0a0a0"/><rect x="1666" y="358" width="1" height="1" fill="#a0a0a0"/><rect x="1666" y="363" width="2" height="1" fill="#a0a0a0"/><rect x="1666" y="364" width="1" height="1" fill="#a0a0a0"/><rect x="1666" y="369" width="2" height="1" fill="#a0a0a0"/><rect x="1666" y="370" width="1" height="1" fill="#a0a0a0"/><rect x="1666" y="375" width="2" height="1" fill="#a0a0a0"/><rect x="1666" y="376" width="1" height="1" fill="#a0a0a0"/><rect x="1666" y="381" width="2" height="1" fill="#a0a0a0"/><rect x="1666" y="382" width="1" height="1" fill="#a0a0a0"/><rect x="1666" y="387" width="2" height="1" fill="#a0a0a0"/><rect x="1666" y="388" width="1" height="1" fill="#a0a0a0"/><rect x="1666" y="393" width="2" height="1" fill="#a0a0a0"/><rect x="1666" y="394" width="1" height="1" fill="#a0a0a0"/><rect x="1666" y="399" width="2" height="1" fill="#a0a0a0"/><rect x="1666" y="400" width="1" height="1" fill="#a0a0a0"/><rect x="1666" y="405" width="2" height="1" fill="#a0a0a0"/><rect x="1666" y="406" width="1" height="1" fill="#a0a0a0"/><rect x="1666" y="411" width="2" height="1" fill="#a0a0a0"/><rect x="1666" y="412" width="1" height="1" fill="#a0a0a0"/><rect x="1666" y="417" width="2" height="1" fill="#a0a0a0"/><rect x="1666" y="418" width="1" height="1" fill="#a0a0a0"/><rect x="1666" y="423" width="2" height="1" fill="#a0a0a0"/><rect x="1666" y="424" width="1" height="1" fill="#a0a0a0"/><rect x="1666" y="429" width="2" height="1" fill="#a0a0a0"/><rect x="1666" y="430" width="1" height="1" fill="#a0a0a0"/><rect x="1666" y="435" width="2" height="1" fill="#a0a0a0"/><rect x="1666" y="436" width="1" height="1" fill="#a0a0a0"/><rect x="1666" y="441" width="2" height="1" fill="#a0a0a0"/><rect x="1666" y="442" width="1" height="1" fill="#a0a0a0"/><rect x="1666" y="447" width="2" height="1" fill="#a0a0a0"/><rect x="1666" y="448" width="1" height="1" fill="#a0a0a0"/><rect x="1666" y="453" width="2" height="1" fill="#a0a0a0"/><rect x="1666" y="454" width="1" height="1" fill="#a0a0a0"/><rect x="1666" y="459" width="2" height="1" fill="#a0a0a0"/><rect x="1666" y="460" width="1" height="1" fill="#a0a0a0"/><rect x="1666" y="465" width="2" height="1" fill="#a0a0a0"/><rect x="1666" y="466" width="1" height="1" fill="#a0a0a0"/><rect x="1666" y="471" width="2" height="1" fill="#a0a0a0"/><rect x="1666" y="472" width="1" height="1" fill="#a0a0a0"/><rect x="1666" y="477" width="2" height="1" fill="#a0a0a0"/><rect x="1666" y="478" width="1" height="1" fill="#a0a0a0"/><rect x="1666" y="483" width="2" height="1" fill="#a0a0a0"/><rect x="1666" y="484" width="1" height="1" fill="#a0a0a0"/><rect x="1666" y="489" width="2" height="1" fill="#a0a0a0"/><rect x="1666" y="490" width="1" height="1" fill="#a0a0a0"/><rect x="1666" y="495" width="2" height="1" fill="#a0a0a0"/><rect x="1666" y="496" width="1" height="1" fill="#a0a0a0"/><rect x="1666" y="501" width="2" height="1" fill="#a0a0a0"/><rect x="1666" y="502" width="1" height="1" fill="#a0a0a0"/><rect x="1666" y="507" width="2" height="1" fill="#a0a0a0"/><rect x="1666" y="508" width="1" height="1" fill="#a0a0a0"/><rect x="1666" y="513" width="2" height="1" fill="#a0a0a0"/><rect x="1666" y="514" width="1" height="1" fill="#a0a0a0"/><rect x="1666" y="561" width="2" height="1" fill="#a0a0a0"/><rect x="1666" y="562" width="1" height="1" fill="#a0a0a0"/><rect x="1666" y="567" width="2" height="1" fill="#a0a0a0"/><rect x="1666" y="568" width="1" height="1" fill="#a0a0a0"/><rect x="1666" y="573" width="2" height="1" fill="#a0a0a0"/><rect x="1666" y="574" width="1" height="1" fill="#a0a0a0"/><rect x="1666" y="579" width="2" height="1" fill="#a0a0a0"/><rect x="1666" y="580" width="1" height="1" fill="#a0a0a0"/><rect x="1666" y="585" width="2" height="1" fill="#a0a0a0"/><rect x="1666" y="586" width="1" height="1" fill="#a0a0a0"/><rect x="1666" y="591" width="2" height="1" fill="#a0a0a0"/><rect x="1666" y="592" width="1" height="1" fill="#a0a0a0"/><rect x="1666" y="597" width="2" height="1" fill="#a0a0a0"/><rect x="1666" y="598" width="1" height="1" fill="#a0a0a0"/><rect x="1666" y="603" width="2" height="1" fill="#a0a0a0"/><rect x="1666" y="604" width="1" height="1" fill="#a0a0a0"/><rect x="1666" y="609" width="2" height="1" fill="#a0a0a0"/><rect x="1666" y="610" width="1" height="1" fill="#a0a0a0"/><rect x="1666" y="615" width="2" height="1" fill="#a0a0a0"/><rect x="1666" y="616" width="1" height="1" fill="#a0a0a0"/><rect x="1666" y="621" width="2" height="1" fill="#a0a0a0"/><rect x="1666" y="622" width="1" height="1" fill="#a0a0a0"/><rect x="1666" y="627" width="2" height="1" fill="#a0a0a0"/><rect x="1666" y="628" width="1" height="1" fill="#a0a0a0"/><rect x="1666" y="633" width="2" height="1" fill="#a0a0a0"/><rect x="1666" y="634" width="1" height="1" fill="#a0a0a0"/><rect x="1666" y="639" width="2" height="1" fill="#a0a0a0"/><rect x="1666" y="640" width="1" height="1" fill="#a0a0a0"/><rect x="1666" y="645" width="2" height="1" fill="#a0a0a0"/><rect x="1666" y="646" width="1" height="1" fill="#a0a0a0"/><rect x="1666" y="651" width="2" height="1" fill="#a0a0a0"/><rect x="1666" y="652" width="1" height="1" fill="#a0a0a0"/><rect x="1666" y="657" width="2" height="1" fill="#a0a0a0"/><rect x="1666" y="658" width="1" height="1" fill="#a0a0a0"/><rect x="1666" y="663" width="2" height="1" fill="#a0a0a0"/><rect x="1666" y="664" width="1" height="1" fill="#a0a0a0"/><rect x="1666" y="669" width="2" height="1" fill="#a0a0a0"/><rect x="1666" y="670" width="1" height="1" fill="#a0a0a0"/><rect x="1666" y="675" width="2" height="1" fill="#a0a0a0"/><rect x="1666" y="676" width="1" height="1" fill="#a0a0a0"/><rect x="1666" y="681" width="2" height="1" fill="#a0a0a0"/><rect x="1666" y="682" width="1" height="1" fill="#a0a0a0"/><rect x="1666" y="687" width="2" height="1" fill="#a0a0a0"/><rect x="1666" y="688" width="1" height="1" fill="#a0a0a0"/><rect x="1666" y="693" width="2" height="1" fill="#a0a0a0"/><rect x="1666" y="694" width="1" height="1" fill="#a0a0a0"/><rect x="1666" y="699" width="2" height="1" fill="#a0a0a0"/><rect x="1666" y="700" width="1" height="1" fill="#a0a0a0"/><rect x="1666" y="705" width="2" height="1" fill="#a0a0a0"/><rect x="1666" y="706" width="1" height="1" fill="#a0a0a0"/><rect x="1666" y="711" width="2" height="1" fill="#a0a0a0"/><rect x="1666" y="712" width="1" height="1" fill="#a0a0a0"/><rect x="1666" y="717" width="2" height="1" fill="#a0a0a0"/><rect x="1666" y="718" width="1" height="1" fill="#a0a0a0"/><rect x="1666" y="723" width="2" height="1" fill="#a0a0a0"/><rect x="1666" y="724" width="1" height="1" fill="#a0a0a0"/><rect x="1666" y="729" width="2" height="1" fill="#a0a0a0"/><rect x="1666" y="730" width="1" height="1" fill="#a0a0a0"/><rect x="1666" y="735" width="2" height="1" fill="#a0a0a0"/><rect x="1666" y="736" width="1" height="1" fill="#a0a0a0"/><rect x="1666" y="741" width="2" height="1" fill="#a0a0a0"/><rect x="1666" y="742" width="1" height="1" fill="#a0a0a0"/><rect x="1666" y="747" width="2" height="1" fill="#a0a0a0"/><rect x="1666" y="748" width="1" height="1" fill="#a0a0a0"/><path d="M1668.5 526 V533 L1664.5 529.5 Z M1664.5 542 V549 L1668.5 545.5 Z" fill="#b8b8b8"/></svg>
<svg class="a" style="left:0;top:0" width="1920" height="800" viewBox="0 0 1920 800"><rect x="310" y="327" width="2" height="1" fill="#a0a0a0"/><rect x="310" y="328" width="1" height="1" fill="#a0a0a0"/><rect x="310" y="333" width="2" height="1" fill="#a0a0a0"/><rect x="310" y="334" width="1" height="1" fill="#a0a0a0"/><rect x="310" y="339" width="2" height="1" fill="#a0a0a0"/><rect x="310" y="340" width="1" height="1" fill="#a0a0a0"/><rect x="310" y="345" width="2" height="1" fill="#a0a0a0"/><rect x="310" y="346" width="1" height="1" fill="#a0a0a0"/><rect x="310" y="351" width="2" height="1" fill="#a0a0a0"/><rect x="310" y="352" width="1" height="1" fill="#a0a0a0"/><rect x="310" y="357" width="2" height="1" fill="#a0a0a0"/><rect x="310" y="358" width="1" height="1" fill="#a0a0a0"/><rect x="310" y="363" width="2" height="1" fill="#a0a0a0"/><rect x="310" y="364" width="1" height="1" fill="#a0a0a0"/><rect x="310" y="369" width="2" height="1" fill="#a0a0a0"/><rect x="310" y="370" width="1" height="1" fill="#a0a0a0"/><rect x="310" y="375" width="2" height="1" fill="#a0a0a0"/><rect x="310" y="376" width="1" height="1" fill="#a0a0a0"/><rect x="310" y="381" width="2" height="1" fill="#a0a0a0"/><rect x="310" y="382" width="1" height="1" fill="#a0a0a0"/><rect x="310" y="387" width="2" height="1" fill="#a0a0a0"/><rect x="310" y="388" width="1" height="1" fill="#a0a0a0"/><rect x="310" y="393" width="2" height="1" fill="#a0a0a0"/><rect x="310" y="394" width="1" height="1" fill="#a0a0a0"/><rect x="310" y="399" width="2" height="1" fill="#a0a0a0"/><rect x="310" y="400" width="1" height="1" fill="#a0a0a0"/><rect x="310" y="405" width="2" height="1" fill="#a0a0a0"/><rect x="310" y="406" width="1" height="1" fill="#a0a0a0"/><rect x="310" y="411" width="2" height="1" fill="#a0a0a0"/><rect x="310" y="412" width="1" height="1" fill="#a0a0a0"/><rect x="310" y="417" width="2" height="1" fill="#a0a0a0"/><rect x="310" y="418" width="1" height="1" fill="#a0a0a0"/><rect x="310" y="423" width="2" height="1" fill="#a0a0a0"/><rect x="310" y="424" width="1" height="1" fill="#a0a0a0"/><rect x="310" y="429" width="2" height="1" fill="#a0a0a0"/><rect x="310" y="430" width="1" height="1" fill="#a0a0a0"/><rect x="310" y="435" width="2" height="1" fill="#a0a0a0"/><rect x="310" y="436" width="1" height="1" fill="#a0a0a0"/><rect x="310" y="441" width="2" height="1" fill="#a0a0a0"/><rect x="310" y="442" width="1" height="1" fill="#a0a0a0"/><rect x="310" y="447" width="2" height="1" fill="#a0a0a0"/><rect x="310" y="448" width="1" height="1" fill="#a0a0a0"/><rect x="310" y="453" width="2" height="1" fill="#a0a0a0"/><rect x="310" y="454" width="1" height="1" fill="#a0a0a0"/><rect x="310" y="459" width="2" height="1" fill="#a0a0a0"/><rect x="310" y="460" width="1" height="1" fill="#a0a0a0"/><rect x="310" y="465" width="2" height="1" fill="#a0a0a0"/><rect x="310" y="466" width="1" height="1" fill="#a0a0a0"/><rect x="310" y="471" width="2" height="1" fill="#a0a0a0"/><rect x="310" y="472" width="1" height="1" fill="#a0a0a0"/><rect x="310" y="477" width="2" height="1" fill="#a0a0a0"/><rect x="310" y="478" width="1" height="1" fill="#a0a0a0"/><rect x="310" y="483" width="2" height="1" fill="#a0a0a0"/><rect x="310" y="484" width="1" height="1" fill="#a0a0a0"/><rect x="310" y="489" width="2" height="1" fill="#a0a0a0"/><rect x="310" y="490" width="1" height="1" fill="#a0a0a0"/><rect x="310" y="495" width="2" height="1" fill="#a0a0a0"/><rect x="310" y="496" width="1" height="1" fill="#a0a0a0"/><rect x="310" y="501" width="2" height="1" fill="#a0a0a0"/><rect x="310" y="502" width="1" height="1" fill="#a0a0a0"/><rect x="310" y="507" width="2" height="1" fill="#a0a0a0"/><rect x="310" y="508" width="1" height="1" fill="#a0a0a0"/><rect x="310" y="513" width="2" height="1" fill="#a0a0a0"/><rect x="310" y="514" width="1" height="1" fill="#a0a0a0"/><rect x="310" y="561" width="2" height="1" fill="#a0a0a0"/><rect x="310" y="562" width="1" height="1" fill="#a0a0a0"/><rect x="310" y="567" width="2" height="1" fill="#a0a0a0"/><rect x="310" y="568" width="1" height="1" fill="#a0a0a0"/><rect x="310" y="573" width="2" height="1" fill="#a0a0a0"/><rect x="310" y="574" width="1" height="1" fill="#a0a0a0"/><rect x="310" y="579" width="2" height="1" fill="#a0a0a0"/><rect x="310" y="580" width="1" height="1" fill="#a0a0a0"/><rect x="310" y="585" width="2" height="1" fill="#a0a0a0"/><rect x="310" y="586" width="1" height="1" fill="#a0a0a0"/><rect x="310" y="591" width="2" height="1" fill="#a0a0a0"/><rect x="310" y="592" width="1" height="1" fill="#a0a0a0"/><rect x="310" y="597" width="2" height="1" fill="#a0a0a0"/><rect x="310" y="598" width="1" height="1" fill="#a0a0a0"/><rect x="310" y="603" width="2" height="1" fill="#a0a0a0"/><rect x="310" y="604" width="1" height="1" fill="#a0a0a0"/><rect x="310" y="609" width="2" height="1" fill="#a0a0a0"/><rect x="310" y="610" width="1" height="1" fill="#a0a0a0"/><rect x="310" y="615" width="2" height="1" fill="#a0a0a0"/><rect x="310" y="616" width="1" height="1" fill="#a0a0a0"/><rect x="310" y="621" width="2" height="1" fill="#a0a0a0"/><rect x="310" y="622" width="1" height="1" fill="#a0a0a0"/><rect x="310" y="627" width="2" height="1" fill="#a0a0a0"/><rect x="310" y="628" width="1" height="1" fill="#a0a0a0"/><rect x="310" y="633" width="2" height="1" fill="#a0a0a0"/><rect x="310" y="634" width="1" height="1" fill="#a0a0a0"/><rect x="310" y="639" width="2" height="1" fill="#a0a0a0"/><rect x="310" y="640" width="1" height="1" fill="#a0a0a0"/><rect x="310" y="645" width="2" height="1" fill="#a0a0a0"/><rect x="310" y="646" width="1" height="1" fill="#a0a0a0"/><rect x="310" y="651" width="2" height="1" fill="#a0a0a0"/><rect x="310" y="652" width="1" height="1" fill="#a0a0a0"/><rect x="310" y="657" width="2" height="1" fill="#a0a0a0"/><rect x="310" y="658" width="1" height="1" fill="#a0a0a0"/><rect x="310" y="663" width="2" height="1" fill="#a0a0a0"/><rect x="310" y="664" width="1" height="1" fill="#a0a0a0"/><rect x="310" y="669" width="2" height="1" fill="#a0a0a0"/><rect x="310" y="670" width="1" height="1" fill="#a0a0a0"/><rect x="310" y="675" width="2" height="1" fill="#a0a0a0"/><rect x="310" y="676" width="1" height="1" fill="#a0a0a0"/><rect x="310" y="681" width="2" height="1" fill="#a0a0a0"/><rect x="310" y="682" width="1" height="1" fill="#a0a0a0"/><rect x="310" y="687" width="2" height="1" fill="#a0a0a0"/><rect x="310" y="688" width="1" height="1" fill="#a0a0a0"/><rect x="310" y="693" width="2" height="1" fill="#a0a0a0"/><rect x="310" y="694" width="1" height="1" fill="#a0a0a0"/><rect x="310" y="699" width="2" height="1" fill="#a0a0a0"/><rect x="310" y="700" width="1" height="1" fill="#a0a0a0"/><rect x="310" y="705" width="2" height="1" fill="#a0a0a0"/><rect x="310" y="706" width="1" height="1" fill="#a0a0a0"/><rect x="310" y="711" width="2" height="1" fill="#a0a0a0"/><rect x="310" y="712" width="1" height="1" fill="#a0a0a0"/><rect x="310" y="717" width="2" height="1" fill="#a0a0a0"/><rect x="310" y="718" width="1" height="1" fill="#a0a0a0"/><rect x="310" y="723" width="2" height="1" fill="#a0a0a0"/><rect x="310" y="724" width="1" height="1" fill="#a0a0a0"/><rect x="310" y="729" width="2" height="1" fill="#a0a0a0"/><rect x="310" y="730" width="1" height="1" fill="#a0a0a0"/><rect x="310" y="735" width="2" height="1" fill="#a0a0a0"/><rect x="310" y="736" width="1" height="1" fill="#a0a0a0"/><rect x="310" y="741" width="2" height="1" fill="#a0a0a0"/><rect x="310" y="742" width="1" height="1" fill="#a0a0a0"/><rect x="310" y="747" width="2" height="1" fill="#a0a0a0"/><rect x="310" y="748" width="1" height="1" fill="#a0a0a0"/><path d="M312.5 526 V533 L308.5 529.5 Z M308.5 542 V549 L312.5 545.5 Z" fill="#b8b8b8"/></svg>
<div class="a" style="left:1663px;top:107px;width:1px;height:861px;background:#fff"></div>
<div class="t" style="left:1734px;top:113px;width:121px;text-align:center;font-size:12px;font-weight:bold;color:#111">Image Presets</div>
<div class="a" style="left:1679px;top:139px;width:231px;height:496px;background:#fff;border:1px solid #4a4a4a;border-radius:5px;box-shadow:-1px -1px 2px rgba(0,0,0,.15)"></div>
<div class="a" style="left:1690px;top:149px;width:9px;height:0;border-top:1px dotted #888"></div>
<svg class="a" style="left:1700px;top:142px" width="14" height="14" viewBox="0 0 14 14"><rect x="1.5" y="1" width="10" height="11" fill="#fff" stroke="#111" stroke-width="1"/><path d="M10.5 8 V13.5 M7.8 10.8 H13.2" stroke="#3aa84a" stroke-width="1.6"/></svg>
<div class="t" style="left:1717px;top:144px;font-size:10.5px;color:#111">Image Bleed with Marks</div>
<div class="a" style="left:1708px;top:649px;width:48px;height:20px;background:#fdfdfd;border:1px solid #cfcfcf;border-radius:3px"></div>
<div class="t" style="left:1708px;top:653px;width:48px;text-align:center;font-size:11px;color:#111">Add</div>
<div class="a" style="left:1760px;top:649px;width:60px;height:20px;background:#f5f5f5;border:1px solid #e2e2e2;border-radius:3px"></div>
<div class="t" style="left:1760px;top:653px;width:60px;text-align:center;font-size:11px;color:#7a7a7a">Delete</div>
<div class="a" style="left:1822px;top:649px;width:56px;height:20px;background:#f5f5f5;border:1px solid #e2e2e2;border-radius:3px"></div>
<div class="t" style="left:1822px;top:653px;width:56px;text-align:center;font-size:11px;color:#7a7a7a">Apply</div>
<svg class="a" style="left:1735px;top:684px" width="120" height="3" viewBox="0 0 120 3"><rect x="0" y="0" width="1.2" height="1.2" fill="#b0b0b0"/><rect x="6" y="0" width="1.2" height="1.2" fill="#b0b0b0"/><rect x="12" y="0" width="1.2" height="1.2" fill="#b0b0b0"/><rect x="18" y="0" width="1.2" height="1.2" fill="#b0b0b0"/><rect x="24" y="0" width="1.2" height="1.2" fill="#b0b0b0"/><rect x="30" y="0" width="1.2" height="1.2" fill="#b0b0b0"/><rect x="36" y="0" width="1.2" height="1.2" fill="#b0b0b0"/><rect x="42" y="0" width="1.2" height="1.2" fill="#b0b0b0"/><rect x="48" y="0" width="1.2" height="1.2" fill="#b0b0b0"/><rect x="54" y="0" width="1.2" height="1.2" fill="#b0b0b0"/><rect x="60" y="0" width="1.2" height="1.2" fill="#b0b0b0"/><rect x="66" y="0" width="1.2" height="1.2" fill="#b0b0b0"/><rect x="72" y="0" width="1.2" height="1.2" fill="#b0b0b0"/><rect x="78" y="0" width="1.2" height="1.2" fill="#b0b0b0"/><rect x="84" y="0" width="1.2" height="1.2" fill="#b0b0b0"/><rect x="90" y="0" width="1.2" height="1.2" fill="#b0b0b0"/><rect x="96" y="0" width="1.2" height="1.2" fill="#b0b0b0"/><rect x="102" y="0" width="1.2" height="1.2" fill="#b0b0b0"/><rect x="108" y="0" width="1.2" height="1.2" fill="#b0b0b0"/><rect x="114" y="0" width="1.2" height="1.2" fill="#b0b0b0"/></svg>
<div class="a" style="left:1676px;top:686px;width:236px;height:1px;background:#fff"></div>
<div class="a" style="left:1676px;top:688px;width:236px;height:1px;background:#707070"></div>
<div class="t" style="left:1734px;top:700px;width:121px;text-align:center;font-size:11px;font-weight:bold;color:#111">Preset Summary</div>
<div class="t" style="left:1675px;top:720px;font-size:11px;color:#111">Preset:</div>
<div class="t" style="left:1675px;top:734px;font-size:11px;color:#111">Description:</div>
<div class="a" style="left:1679px;top:749px;width:231px;height:34px;background:#fff;border:1px solid #4a4a4a;border-radius:5px"></div>
<div class="a" style="left:1679px;top:794px;width:231px;height:156px;background:#fff;border:1px solid #4a4a4a;border-radius:5px"></div>
<div class="t" style="left:33px;top:980px;font-size:11px;color:#111">Printer</div>
<div class="a" style="left:102px;top:975px;width:467px;height:19px;background:#fdfdfd;border:1px solid #d3d3d3;border-radius:2px"></div><div class="t" style="left:106px;top:980px;font-size:11px;color:#111">Canon Arizona 2380 GTF</div><svg class="a" style="left:554px;top:982px" width="10" height="7" viewBox="0 0 10 7"><path d="M1 1.5 L5 5.5 L9 1.5" fill="none" stroke="#333" stroke-width="1"/></svg>
<div class="t" style="left:591px;top:980px;font-size:11px;color:#111">Media</div>
<div class="a" style="left:646px;top:975px;width:504px;height:19px;background:#fdfdfd;border:1px solid #d3d3d3;border-radius:2px"></div><div class="t" style="left:650px;top:980px;font-size:11px;color:#111">Generic Paper Express</div><svg class="a" style="left:1135px;top:982px" width="10" height="7" viewBox="0 0 10 7"><path d="M1 1.5 L5 5.5 L9 1.5" fill="none" stroke="#333" stroke-width="1"/></svg>
<div class="t" style="left:33px;top:1005px;font-size:11px;color:#111">Cutter</div>
<div class="a" style="left:102px;top:1000px;width:467px;height:19px;background:#fdfdfd;border:1px solid #d3d3d3;border-radius:2px"></div><div class="t" style="left:106px;top:1005px;font-size:11px;color:#111">No Cutter</div><svg class="a" style="left:554px;top:1007px" width="10" height="7" viewBox="0 0 10 7"><path d="M1 1.5 L5 5.5 L9 1.5" fill="none" stroke="#333" stroke-width="1"/></svg>
<div class="t" style="left:591px;top:1005px;font-size:11px;color:#111">Mode</div>
<div class="a" style="left:646px;top:1000px;width:504px;height:19px;background:#fdfdfd;border:1px solid #d3d3d3;border-radius:2px"></div><div class="t" style="left:650px;top:1005px;font-size:11px;color:#111">Generic Paper - Express</div><svg class="a" style="left:1135px;top:1007px" width="10" height="7" viewBox="0 0 10 7"><path d="M1 1.5 L5 5.5 L9 1.5" fill="none" stroke="#333" stroke-width="1"/></svg>
<div class="t" style="left:33px;top:1030px;font-size:11px;color:#111">Media Group</div>
<div class="a" style="left:102px;top:1025px;width:467px;height:19px;background:#fdfdfd;border:1px solid #d3d3d3;border-radius:2px"></div><div class="t" style="left:106px;top:1030px;font-size:11px;color:#111">Arizona 2380 IJC357</div><svg class="a" style="left:554px;top:1032px" width="10" height="7" viewBox="0 0 10 7"><path d="M1 1.5 L5 5.5 L9 1.5" fill="none" stroke="#333" stroke-width="1"/></svg>
<div class="t" style="left:591px;top:1030px;font-size:11px;color:#111">Page Size</div>
<div class="a" style="left:646px;top:1025px;width:504px;height:19px;background:#fdfdfd;border:1px solid #d3d3d3;border-radius:2px"></div><div class="t" style="left:650px;top:1030px;font-size:11px;color:#111">96x48 Inch Sheet</div><svg class="a" style="left:1135px;top:1032px" width="10" height="7" viewBox="0 0 10 7"><path d="M1 1.5 L5 5.5 L9 1.5" fill="none" stroke="#333" stroke-width="1"/></svg>
<div class="a" style="left:5px;top:1001px;width:18px;height:18px;background:#fbfbfb;border:1px solid #d0d0d0;border-radius:3px"></div>
<svg class="a" style="left:8px;top:1005px" width="12" height="10" viewBox="0 0 12 10"><defs><linearGradient id="tg" x1="0" x2="1"><stop offset="0" stop-color="#333"/><stop offset="1" stop-color="#999"/></linearGradient></defs><path d="M0.5 0.5 H11.5 L6 9.5 Z" fill="url(#tg)"/></svg>
<div class="a" style="left:1494px;top:993px;width:92px;height:33px;background:#fdfdfd;border:1px solid #d0d0d0;border-radius:3px"></div>
<svg class="a" style="left:1500px;top:995px" width="45" height="30" viewBox="0 0 45 30">
<path d="M27.5 9 L28.5 6 H37 L37.5 9 Z" fill="#fff" stroke="#9a9a9a" stroke-width="0.5"/>
<path d="M20 13.5 L22 10 L37 9.5 L42 10.5 V15.5 L38 17 L21 15.5 Z" fill="#cfcfcf" stroke="#8a8a8a" stroke-width="0.5"/>
<path d="M21.5 12.5 L23 9.5 L36 9 L37.5 11.5 L36 12.5 Z" fill="#222"/>
<path d="M38 10.5 L42 10 V15.5 L38.5 17 Z" fill="#b8b8b8"/>
<path d="M33.5 16 H38.5 V23.5 H34 Z" fill="#d0d0d0" stroke="#999" stroke-width="0.5"/>
<path d="M19 17.5 H23 V22.5 H19.5 Z" fill="#dcdcdc" stroke="#aaa" stroke-width="0.5"/>
<path d="M18 18 L28 17" stroke="#888" stroke-width="0.6"/>
<path d="M14 20.5 Q11 15 17 11.5 L16.5 8.5 L20.8 12.8 L17.5 17 L17.3 14.5 Q14 16 14 20.5 Z" fill="#3a9a3e" stroke="#1f6a22" stroke-width="0.5"/>
</svg>
<div class="t" style="left:1546px;top:1005px;font-size:11.5px;color:#111">Print</div>
<div class="a" style="left:0;top:1055px;width:1920px;height:2px;background:#6a6a6a"></div>
<div class="a" style="left:3px;top:1061px;width:14px;height:15px;background:#2fb843;border:1px solid #1e8a2e"></div>
<svg class="a" style="left:3px;top:1061px" width="14" height="15" viewBox="0 0 14 15"><path d="M7 3 V12 M2.5 7.5 H11.5" stroke="#fff" stroke-width="2"/></svg>
<div class="a" style="left:24px;top:1075px;width:70px;height:2px;background:#8a8a8a"></div>
<div class="t" style="left:26px;top:1062px;font-size:11px;color:#111">Job 0001</div>
<svg class="a" style="left:76px;top:1060px" width="14" height="14" viewBox="0 0 14 14"><rect x="0.5" y="0.5" width="13" height="13" fill="#e8453c" stroke="#b02a20"/><path d="M3.5 3.5 L10.5 10.5 M10.5 3.5 L3.5 10.5" stroke="#fff" stroke-width="1.8"/></svg>
<div class="a" style="left:176px;top:1055px;width:2px;height:23px;background:#6a6a6a"></div>
<div class="a" style="left:96px;top:1077px;width:82px;height:2px;background:#8a8a8a;border-radius:0 0 2px 0"></div>
<div class="t" style="left:101px;top:1063px;font-size:11.5px;font-weight:bold;color:#111">Job 0002</div>
<svg class="a" style="left:157px;top:1062px" width="14" height="14" viewBox="0 0 14 14"><rect x="0.5" y="0.5" width="13" height="13" fill="#e8453c" stroke="#b02a20"/><path d="M3.5 3.5 L10.5 10.5 M10.5 3.5 L3.5 10.5" stroke="#fff" stroke-width="1.8"/></svg>
<div class="a" style="left:1662px;top:103px;width:252px;height:75px;border:6px solid #6591c8"></div>
<div class="a" style="left:1418px;top:153px;width:429px;height:121px;background:#6591c8;overflow:hidden">
<div class="a" style="left:6px;top:6px;width:417px;height:109px;background:#f0f0f0;overflow:hidden">
<div class="a" style="left:0;top:0;width:2px;height:109px;background:#fff"></div>
<div class="a" style="left:3px;top:0;width:2px;height:109px;background:#8a8a8a"></div>
<svg class="a" style="left:0;top:0" width="417" height="109" viewBox="1424 159 417 109"><text x="1572" y="182.5" font-family="Liberation Sans" font-weight="bold" font-size="19" fill="#0a0a14" textLength="143.5" lengthAdjust="spacingAndGlyphs">Image Presets</text><rect x="1444.5" y="212.5" width="399" height="80" rx="6" fill="#fff" stroke="#4a4a4a" stroke-width="2"/><path d="M1462 231 H1478" stroke="#9a9a9a" stroke-width="1.3" stroke-dasharray="2 1.2"/><rect x="1482.2" y="219.4" width="17" height="18.5" fill="#fff" stroke="#111" stroke-width="2.3"/><path d="M1495.5 229.5 H1499.5 V225.5 H1503.5 V229.5 H1507.5 V233.5 H1503.5 V237.5 H1499.5 V233.5 H1495.5 Z" transform="translate(-4 3)" fill="#bfe8c4" stroke="#3aa050" stroke-width="1.6"/><text x="1510" y="236.7" font-family="Liberation Sans" font-size="19.3" fill="#0a0a20" textLength="196" lengthAdjust="spacingAndGlyphs">Image Bleed with Marks</text><path d="M1568 231.5 V256.5 L1574 251 L1579 261 L1584 258.5 L1579 249 L1587.5 248.5 Z" fill="#fff" stroke="#2a2a34" stroke-width="1.6" stroke-linejoin="round"/></svg>
</div></div></body></html>
